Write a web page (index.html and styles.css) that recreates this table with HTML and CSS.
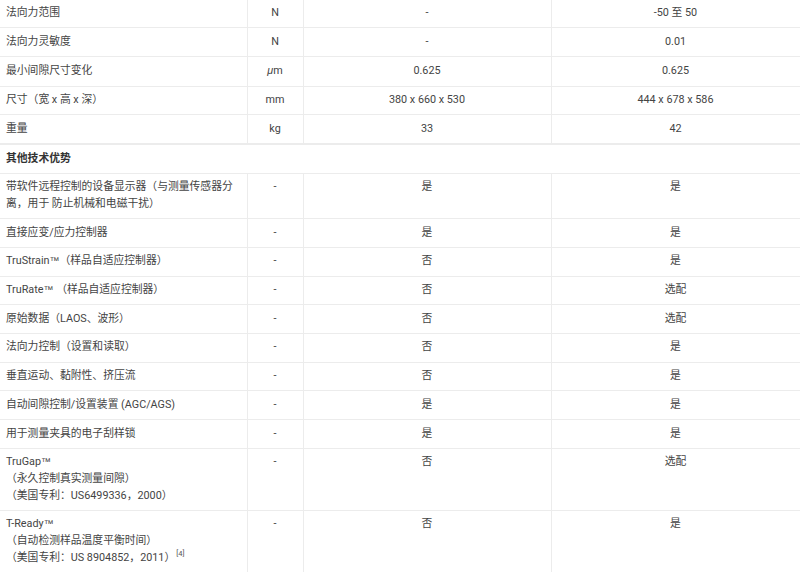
FILE: index.html
```html
<!DOCTYPE html>
<html lang="zh-CN">
<head>
<meta charset="utf-8">
<title>技术参数</title>
<link rel="stylesheet" href="styles.css">
</head>
<body>
<table class="spec spec-top">
  <colgroup><col class="c1"><col class="c2"><col class="c3"><col class="c4"></colgroup>
  <tbody>
    <tr><td>法向力范围</td><td class="ctr">N</td><td class="ctr">-</td><td class="ctr">-50 至 50</td></tr>
    <tr><td>法向力灵敏度</td><td class="ctr">N</td><td class="ctr">-</td><td class="ctr">0.01</td></tr>
    <tr><td>最小间隙尺寸变化</td><td class="ctr"><span class="unit">μ</span>m</td><td class="ctr">0.625</td><td class="ctr">0.625</td></tr>
    <tr><td>尺寸（宽 x 高 x 深）</td><td class="ctr">mm</td><td class="ctr">380 x 660 x 530</td><td class="ctr">444 x 678 x 586</td></tr>
    <tr><td>重量</td><td class="ctr">kg</td><td class="ctr">33</td><td class="ctr">42</td></tr>
  </tbody>
</table>
<table class="spec spec-bottom">
  <colgroup><col class="c1"><col class="c2"><col class="c3"><col class="c4"></colgroup>
  <tbody>
    <tr class="section"><td colspan="4">其他技术优势</td></tr>
    <tr><td>带软件远程控制的设备显示器（与测量传感器分离，用于 防止机械和电磁干扰）</td><td class="ctr">-</td><td class="ctr">是</td><td class="ctr">是</td></tr>
    <tr><td>直接应变/应力控制器</td><td class="ctr">-</td><td class="ctr">是</td><td class="ctr">是</td></tr>
    <tr><td>TruStrain<span class="tm">™</span>（样品自适应控制器）</td><td class="ctr">-</td><td class="ctr">否</td><td class="ctr">是</td></tr>
    <tr><td>TruRate<span class="tm">™</span> （样品自适应控制器）</td><td class="ctr">-</td><td class="ctr">否</td><td class="ctr">选配</td></tr>
    <tr><td>原始数据（LAOS、波形）</td><td class="ctr">-</td><td class="ctr">否</td><td class="ctr">选配</td></tr>
    <tr><td>法向力控制（设置和读取）</td><td class="ctr">-</td><td class="ctr">否</td><td class="ctr">是</td></tr>
    <tr><td>垂直运动、黏附性、挤压流</td><td class="ctr">-</td><td class="ctr">否</td><td class="ctr">是</td></tr>
    <tr><td>自动间隙控制/设置装置 (AGC/AGS)</td><td class="ctr">-</td><td class="ctr">是</td><td class="ctr">是</td></tr>
    <tr><td>用于测量夹具的电子刮样锁</td><td class="ctr">-</td><td class="ctr">是</td><td class="ctr">是</td></tr>
    <tr><td>TruGap<span class="tm">™</span><br>（永久控制真实测量间隙）<br>（美国专利：US6499336，2000）</td><td class="ctr">-</td><td class="ctr">否</td><td class="ctr">选配</td></tr>
    <tr><td>T-Ready<span class="tm">™</span><br>（自动检测样品温度平衡时间）<br>（美国专利：US 8904852，2011）<sup class="ref">[4]</sup></td><td class="ctr">-</td><td class="ctr">否</td><td class="ctr">是</td></tr>
  </tbody>
</table>
</body>
</html>
```

FILE: styles.css
```css
html, body {
  margin: 0;
  padding: 0;
  background: #ffffff;
}

body {
  font-family: Roboto, "Noto Sans CJK SC", sans-serif;
  font-size: 10.8px;
  line-height: 16.7px;
  color: #444444;
}

.spec {
  width: 800px;
  border-collapse: collapse;
  table-layout: fixed;
}

.spec-top {
  margin-top: -1.5px;
  border-bottom: 1px solid #ebebeb;
}

.spec-bottom {
  border-top: 1px solid #ebebeb;
}

.c1 { width: 247px; }
.c2 { width: 56px; }
.c3 { width: 248px; }
.c4 { width: 249px; }

.spec td {
  padding: 5.5px 6px 5.5px;
  border: 1px solid #ececec;
}

.spec td:first-child {
  border-left: none;
}

.spec-top td {
  vertical-align: middle;
}

.spec-bottom td {
  vertical-align: top;
}

.ctr {
  text-align: center;
}

.section td {
  font-weight: bold;
  color: #333333;
  border-right: 1px solid #ffffff;
}

.tm {
  font-family: "Liberation Sans", sans-serif;
  font-size: 10px;
}

.unit {
  font-family: "Liberation Sans", sans-serif;
  font-style: italic;
}

.ref {
  font-size: 7.5px;
  line-height: 0;
  vertical-align: 5px;
  margin-left: 1px;
  color: #555555;
}
```
